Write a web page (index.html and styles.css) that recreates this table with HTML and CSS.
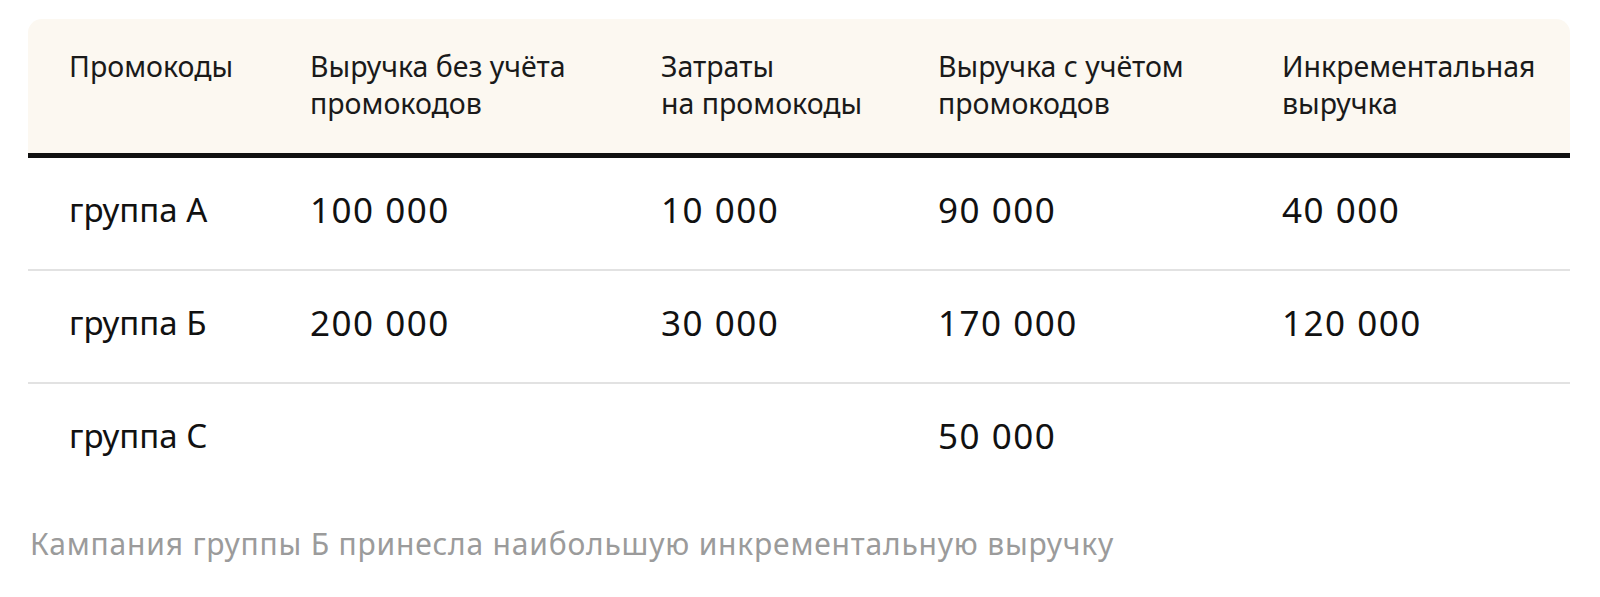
FILE: index.html
```html
<!DOCTYPE html>
<html lang="ru">
<head>
<meta charset="utf-8">
<link rel="stylesheet" href="styles.css">
</head>
<body>
<div class="page">
  <div class="table">
    <div class="row head">
      <div class="cell">Промокоды</div>
      <div class="cell">Выручка без учёта<br>промокодов</div>
      <div class="cell">Затраты<br>на промокоды</div>
      <div class="cell">Выручка с учётом<br>промокодов</div>
      <div class="cell">Инкрементальная<br>выручка</div>
    </div>
    <div class="row body-row">
      <div class="cell">группа А</div>
      <div class="cell num">100 000</div>
      <div class="cell num">10 000</div>
      <div class="cell num">90 000</div>
      <div class="cell num">40 000</div>
    </div>
    <div class="row body-row">
      <div class="cell">группа Б</div>
      <div class="cell num">200 000</div>
      <div class="cell num">30 000</div>
      <div class="cell num">170 000</div>
      <div class="cell num">120 000</div>
    </div>
    <div class="row body-row last">
      <div class="cell">группа С</div>
      <div class="cell num"></div>
      <div class="cell num"></div>
      <div class="cell num">50 000</div>
      <div class="cell num"></div>
    </div>
  </div>
  <p class="caption">Кампания группы Б принесла наибольшую инкрементальную выручку</p>
</div>
</body>
</html>
```
FILE: styles.css
```css
html, body {
  margin: 0;
  padding: 0;
  background: #ffffff;
}
body {
  font-family: "Noto Sans", "Open Sans", sans-serif;
  color: #111111;
}
.page {
  padding: 19px 30px 0 28px;
}
.table {
  display: flex;
  flex-direction: column;
}
.row {
  display: grid;
  grid-template-columns: 241px 351px 277px 344px 1fr;
  padding-left: 41px;
}
.head {
  background: #fcf8f1;
  border-radius: 14px 14px 0 0;
  border-bottom: 5px solid #111111;
  padding-top: 29px;
  padding-bottom: 31px;
  font-size: 28.5px;
  line-height: 37px;
  color: #1a1a1a;
}
.body-row {
  font-size: 33px;
  line-height: 45px;
  padding-top: 29px;
  padding-bottom: 37px;
  border-bottom: 2px solid #e2e2e2;
}
.body-row.last {
  border-bottom: none;
}
.num {
  font-size: 35px;
  letter-spacing: 1.5px;
}
.caption {
  margin: 29px 0 0 2px;
  font-size: 30px;
  line-height: 40px;
  letter-spacing: 0.8px;
  color: #9b9b9b;
}
```
